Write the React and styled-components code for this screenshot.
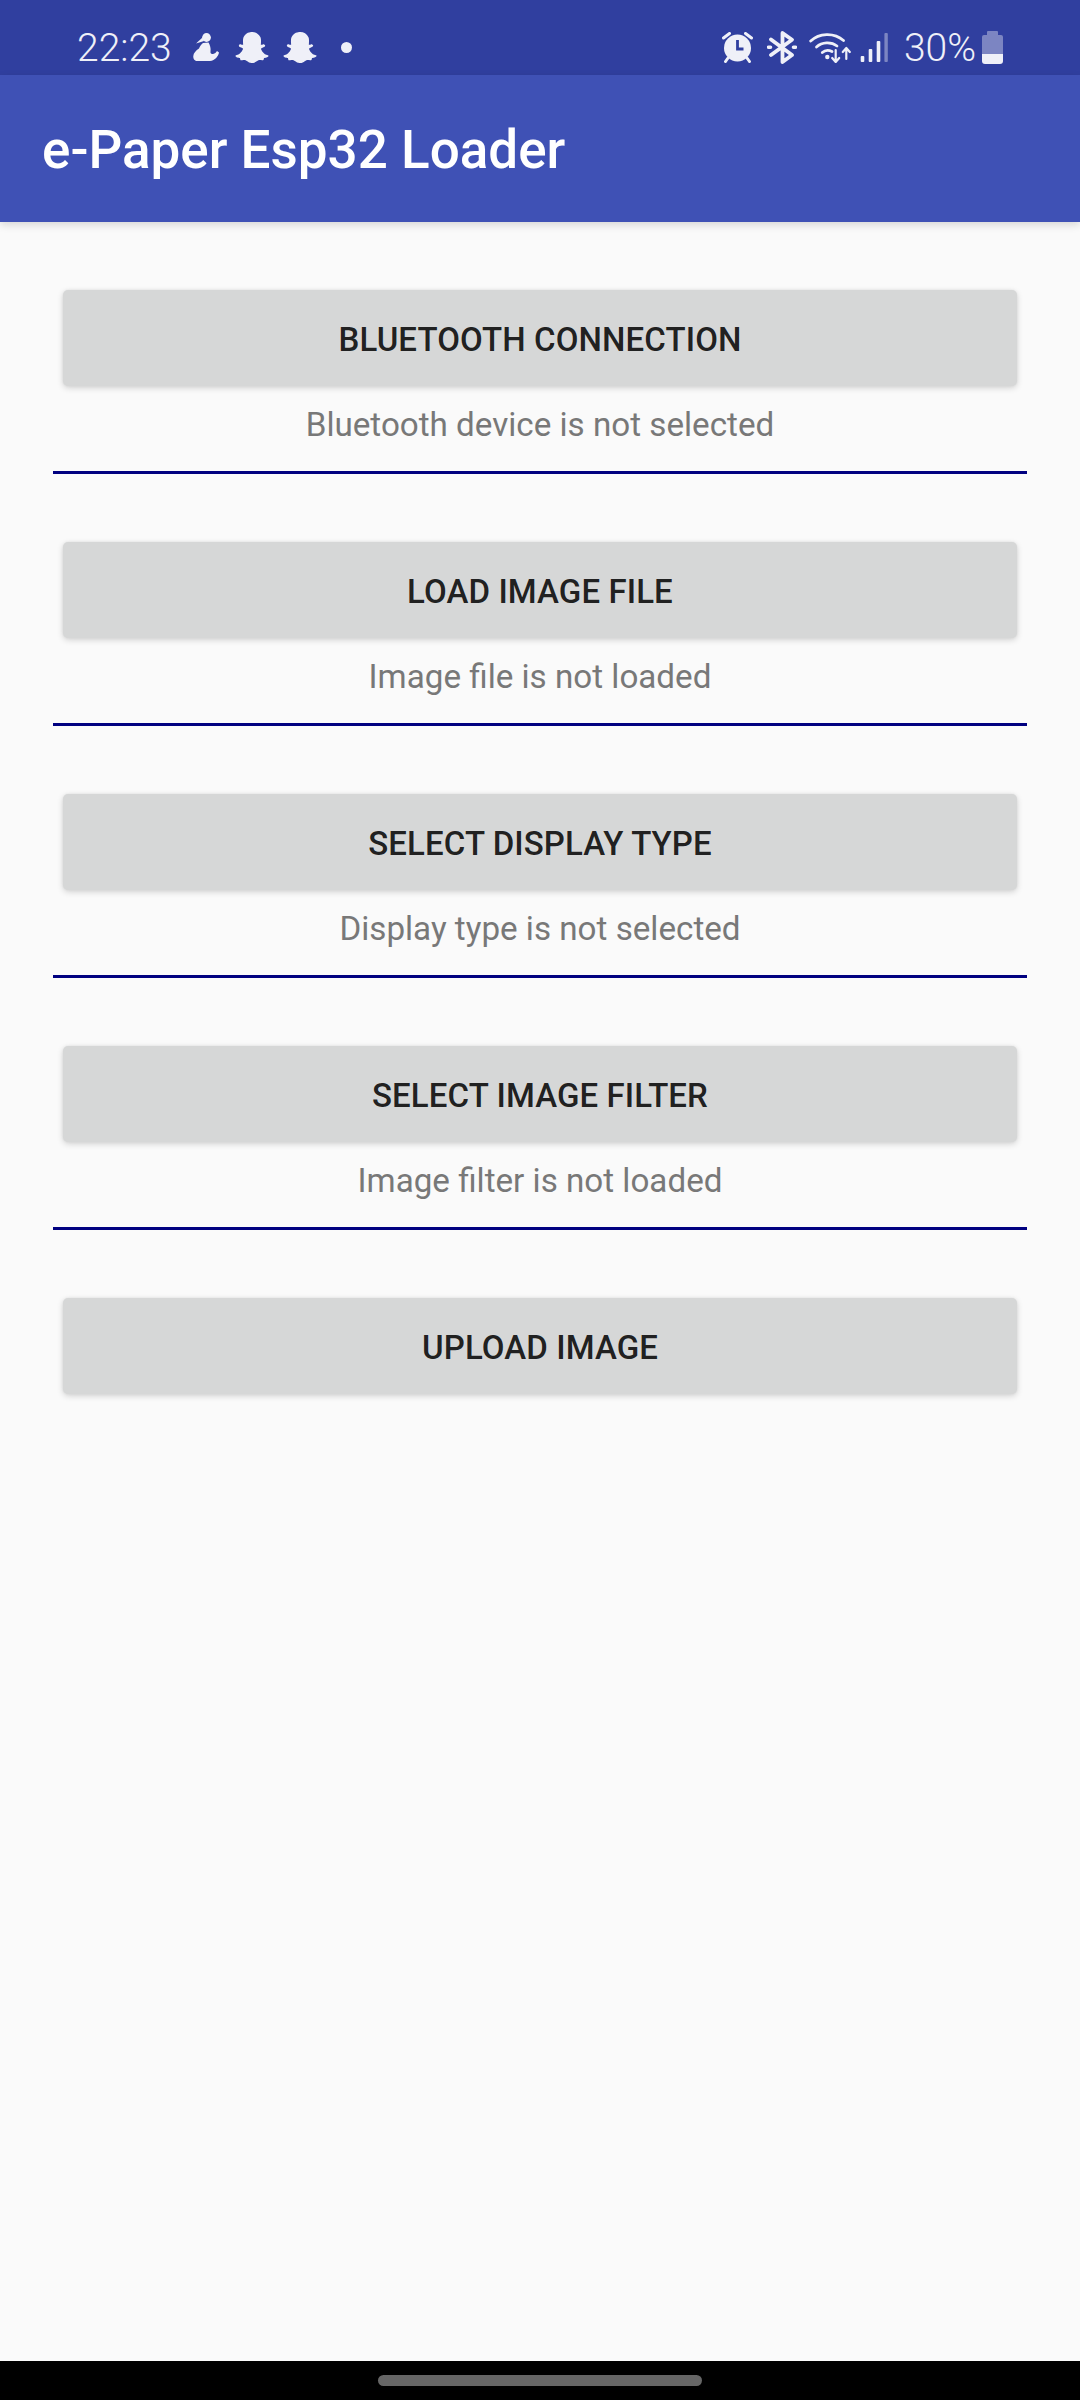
import React from "react";
import styled, { createGlobalStyle } from "styled-components";
import { FaSnapchatGhost } from "react-icons/fa";

const Global = createGlobalStyle`
  html, body { margin: 0; padding: 0; background: #fafafa; }
  * { box-sizing: border-box; }
`;

const Screen = styled.div`
  width: 1080px;
  height: 2400px;
  display: flex;
  flex-direction: column;
  background: #fafafa;
  font-family: Roboto, "Liberation Sans", sans-serif;
  overflow: hidden;
`;

const StatusBar = styled.div`
  height: 75px;
  flex: none;
  display: flex;
  align-items: center;
  justify-content: space-between;
  padding: 20px 77px 0 77px;
  background: #303f9f;
  color: #eff0f8;
`;

const StatusGroup = styled.div`
  display: flex;
  align-items: center;
`;

const Clock = styled.span`
  font-size: 39px;
  font-weight: 300;
  line-height: 46px;
  margin-right: 21px;
`;

const Percent = styled.span`
  font-size: 39px;
  font-weight: 300;
  line-height: 46px;
  margin: 0 6px 0 16px;
`;

const Ghost = styled(FaSnapchatGhost)`
  width: 34px;
  height: 33px;
  margin-right: 14px;
  color: #eff0f8;
`;

const Dot = styled.span`
  width: 11px;
  height: 11px;
  margin-left: 10px;
  border-radius: 50%;
  background: #eff0f8;
`;

const Glyph = styled.svg`
  display: block;
  flex: none;
  margin-right: ${(p) => p.$gap || 0}px;
`;

const AppBar = styled.header`
  height: 147px;
  flex: none;
  display: flex;
  align-items: center;
  padding: 3px 42px 0;
  background: #3f51b5;
  box-shadow: 0 3px 8px rgba(0, 0, 0, 0.14);
  position: relative;
`;

const Title = styled.h1`
  margin: 0;
  color: #fff;
  font-size: 53px;
  font-weight: 500;
  line-height: 64px;
`;

const Content = styled.main`
  flex: 1;
  display: flex;
  flex-direction: column;
  padding: 68px 53px 0;
`;

const Step = styled.section`
  display: flex;
  flex-direction: column;
  align-items: stretch;
  height: 252px;
`;

const ActionButton = styled.button`
  height: 96px;
  margin: 0 10px;
  padding: 2px 0 0;
  border: 0;
  border-radius: 5px;
  background: #d6d7d7;
  color: rgba(0, 0, 0, 0.87);
  font-family: inherit;
  font-size: 33px;
  font-weight: 500;
  letter-spacing: 0.1px;
  box-shadow: 0 2px 6px rgba(0, 0, 0, 0.16), 0 0 3px rgba(0, 0, 0, 0.06);
`;

const Hint = styled.p`
  margin: 19px 0 0;
  color: #787878;
  font-size: 33.2px;
  line-height: 39px;
  text-align: center;
`;

const Rule = styled.hr`
  width: 100%;
  height: 3px;
  margin: 27px 0 0;
  border: 0;
  background: #000080;
`;

const NavBar = styled.div`
  height: 39px;
  flex: none;
  display: flex;
  justify-content: center;
  padding-top: 14px;
  background: #000;
`;

const NavPill = styled.div`
  width: 324px;
  height: 11px;
  border-radius: 6px;
  background: #666;
`;

const ICON = "#eff0f8";

const HealthIcon = () => (
  <Glyph $gap={16} width="26" height="30" viewBox="0 0 26 30" fill={ICON}>
    <circle cx="13.5" cy="4.5" r="4.4" />
    <path d="M3 10.5 L9.5 4.5 L11 8 Z" />
    <path d="M10 10 L15.5 9.5 C17 12 18 15 17.5 18.5 C17.3 20 18 21.5 20 21 C22 20.5 23 19.5 24 18 L26 19.5 C25.5 23 22 27.5 17 28 L4 28 C1.5 28 0 25.5 0.3 23 C0.5 20 3 17.5 6 15.5 C7 13 8.5 11 10 10 Z" />
  </Glyph>
);

const AlarmIcon = () => (
  <Glyph $gap={14} width="31" height="31" viewBox="0 0 31 31">
    <circle cx="15.5" cy="16" r="13.5" fill={ICON} />
    <path d="M1.5 6 L7.5 1.5 M29.5 6 L23.5 1.5 M6 26 L3.5 29.5 M25 26 L27.5 29.5" stroke={ICON} strokeWidth="3" strokeLinecap="round" />
    <path d="M15.5 8 V17 H21.5" stroke="#303f9f" strokeWidth="2.8" fill="none" />
  </Glyph>
);

const BluetoothIcon = () => (
  <Glyph $gap={12} width="30" height="33" viewBox="0 0 30 33" fill="none" stroke={ICON} strokeLinecap="round" strokeLinejoin="round">
    <path d="M4 8.5 L25 24 L15.5 31 V2 L25 8.7 L4 24" strokeWidth="3.8" />
    <path d="M1.5 16.2 H3.5 M26.5 16.2 H28.5" strokeWidth="3.6" />
  </Glyph>
);

const WifiIcon = () => (
  <Glyph $gap={9} width="42" height="31" viewBox="0 0 42 31" fill="none" stroke={ICON} strokeLinecap="round">
    <path d="M1.7 9 C10 1 25 0 34.5 8.5" strokeWidth="2.8" />
    <path d="M7.5 15 C13 10 22 9.5 28 14" strokeWidth="2.8" />
    <path d="M13.3 20.5 C16 18 20 18 23 19.5" strokeWidth="2.8" />
    <circle cx="18.3" cy="25" r="2.2" fill={ICON} stroke="none" />
    <path d="M26.7 18 V30 M23.2 26 L26.7 30 L30.2 26 M37.3 27 V16 M33.8 20 L37.3 16 L40.8 20" strokeWidth="2.2" strokeLinejoin="round" />
  </Glyph>
);

const SignalIcon = () => (
  <Glyph width="28" height="29" viewBox="0 0 28 29">
    <rect x="0.7" y="23" width="3.6" height="6" rx="1" fill={ICON} />
    <rect x="8.7" y="16" width="3.6" height="13" rx="1" fill={ICON} />
    <rect x="16.7" y="8" width="3.6" height="21" rx="1" fill={ICON} />
    <rect x="24.4" y="0" width="3.4" height="29" rx="1" fill={ICON} opacity="0.4" />
  </Glyph>
);

const BatteryIcon = () => (
  <Glyph width="21" height="33" viewBox="0 0 21 33">
    <path d="M6 0 H15 a1 1 0 0 1 1 1 V4 H19 a2 2 0 0 1 2 2 V23 H0 V6 a2 2 0 0 1 2-2 H5 V1 a1 1 0 0 1 1-1 Z" fill={ICON} opacity="0.4" />
    <path d="M0 23 H21 V30 a3 3 0 0 1-3 3 H3 a3 3 0 0 1-3-3 Z" fill={ICON} />
  </Glyph>
);

const steps = [
  { label: "BLUETOOTH CONNECTION", hint: "Bluetooth device is not selected" },
  { label: "LOAD IMAGE FILE", hint: "Image file is not loaded" },
  { label: "SELECT DISPLAY TYPE", hint: "Display type is not selected" },
  { label: "SELECT IMAGE FILTER", hint: "Image filter is not loaded" },
  { label: "UPLOAD IMAGE" },
];

export default function App() {
  return (
    <>
      <Global />
      <Screen>
        <StatusBar>
          <StatusGroup>
            <Clock>22:23</Clock>
            <HealthIcon />
            <Ghost />
            <Ghost />
            <Dot />
          </StatusGroup>
          <StatusGroup>
            <AlarmIcon />
            <BluetoothIcon />
            <WifiIcon />
            <SignalIcon />
            <Percent>30%</Percent>
            <BatteryIcon />
          </StatusGroup>
        </StatusBar>
        <AppBar>
          <Title>e-Paper Esp32 Loader</Title>
        </AppBar>
        <Content>
          {steps.map((s) => (
            <Step key={s.label}>
              <ActionButton>{s.label}</ActionButton>
              {s.hint && (
                <>
                  <Hint>{s.hint}</Hint>
                  <Rule />
                </>
              )}
            </Step>
          ))}
        </Content>
        <NavBar>
          <NavPill />
        </NavBar>
      </Screen>
    </>
  );
}
